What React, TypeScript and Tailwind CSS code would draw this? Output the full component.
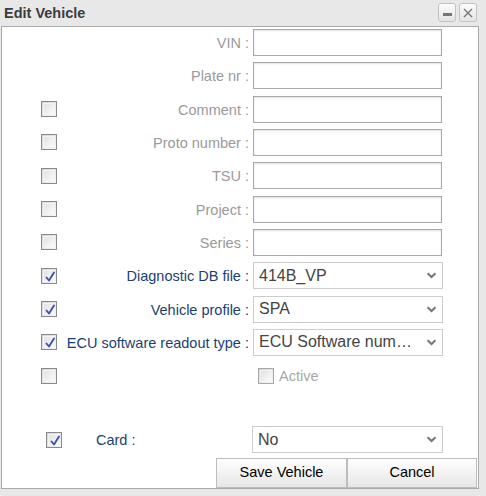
import React from "react";

const font = { fontFamily: '"Liberation Sans", Arial, sans-serif' };

function Check({ checked = false, disabled = false }: { checked?: boolean; disabled?: boolean }) {
  return (
    <div
      className={`w-[16px] h-[16px] border ${disabled ? "border-[#aaa]" : "border-[#8a8a8a]"} bg-gradient-to-br from-[#d4d4d4] to-[#f7f7f7] p-[1px] shrink-0`}
    >
      <div className="w-full h-full border border-[#f4f4f4] bg-gradient-to-br from-[#e2e2e2] to-[#fbfbfb] relative">
        {checked && (
          <svg viewBox="0 0 14 14" className="absolute left-[-1px] top-[-1px] w-[14px] h-[14px]">
            <path d="M3.5 7.5 L6 10.5 L11 2.5" stroke="#3d55a8" strokeWidth="1.9" fill="none" strokeLinecap="round" strokeLinejoin="round" />
          </svg>
        )}
      </div>
    </div>
  );
}

function Chevron() {
  return (
    <svg viewBox="0 0 12 8" className="w-[11px] h-[7px]">
      <path d="M1.5 1.5 L6 5.8 L10.5 1.5" stroke="#777" strokeWidth="2.4" fill="none" />
    </svg>
  );
}

function TextInput() {
  return <div className="w-[189px] h-[27px] border border-[#a9a9a9] bg-white shadow-[inset_0_1px_2px_rgba(0,0,0,0.12)]" />;
}

function Select({ value, w = "w-[190px]" }: { value: string; w?: string }) {
  return (
    <div className={`${w} h-[27px] border border-[#cdcdcd] bg-white flex items-center pl-[5px]`}>
      <span className="flex-1 min-w-0 text-[16px] text-[#444] whitespace-nowrap overflow-hidden text-ellipsis">{value}</span>
      <div className="w-[23px] shrink-0 flex items-center justify-center pl-[2px]">
        <Chevron />
      </div>
    </div>
  );
}

function Row({
  label,
  check,
  checked,
  enabled,
  children,
}: {
  label?: string;
  check?: boolean;
  checked?: boolean;
  enabled?: boolean;
  children: React.ReactNode;
}) {
  return (
    <div className="flex items-center h-[27px]">
      <div className="w-[251px] flex items-center">
        <div className="w-[55px] pl-[39px] flex items-center">{check && <Check checked={checked} />}</div>
        <div className={`flex-1 text-right pr-[4px] pt-[3px] text-[14.5px] whitespace-nowrap ${enabled ? "text-[#1b3f73]" : "text-[#9a9a9a]"}`}>
          {label}
        </div>
      </div>
      {children}
    </div>
  );
}

export default function App() {
  return (
    <div className="w-[486px] h-[496px] bg-[#e8e8e8] relative overflow-hidden" style={font}>
      <div className="h-[26px] flex items-start">
        <div className="pl-[4px] pt-[3px] text-[14.5px] font-bold text-[#3c3c3c] flex-1">Edit Vehicle</div>
        <div className="flex gap-[3px] pt-[3px] pr-[9px]">
          <div className="w-[18px] h-[19px] rounded-[3px] border border-[#c2c2c2] bg-gradient-to-b from-[#fdfdfd] to-[#e4e4e4] flex items-end justify-center pb-[5px]">
            <div className="w-[9px] h-[3px] bg-[#777]" />
          </div>
          <div className="w-[18px] h-[19px] rounded-[3px] border border-[#c2c2c2] bg-gradient-to-b from-[#fdfdfd] to-[#e4e4e4] flex items-center justify-center">
            <svg viewBox="0 0 10 10" className="w-[10px] h-[10px]">
              <path d="M1 1 L9 9 M9 1 L1 9" stroke="#777" strokeWidth="1.4" />
            </svg>
          </div>
        </div>
      </div>
      <div className="ml-[1px] w-[478px] h-[463px] border border-[#aaa] bg-white flex flex-col pt-[2px]">
        <div className="flex flex-col gap-[6.33px]">
          <Row label="VIN :">
            <TextInput />
          </Row>
          <Row label="Plate nr :">
            <TextInput />
          </Row>
          <Row label="Comment :" check>
            <TextInput />
          </Row>
          <Row label="Proto number :" check>
            <TextInput />
          </Row>
          <Row label="TSU :" check>
            <TextInput />
          </Row>
          <Row label="Project :" check>
            <TextInput />
          </Row>
          <Row label="Series :" check>
            <TextInput />
          </Row>
          <Row label="Diagnostic DB file :" check checked enabled>
            <Select value="414B_VP" />
          </Row>
          <Row label="Vehicle profile :" check checked enabled>
            <Select value="SPA" />
          </Row>
          <Row label="ECU software readout type :" check checked enabled>
            <Select value="ECU Software number" />
          </Row>
          <Row check>
            <div className="flex items-center pl-[5px] gap-[5px]">
              <Check disabled />
              <span className="text-[14.5px] pt-[2px] text-[#a8a8a8]">Active</span>
            </div>
          </Row>
        </div>
        <div className="flex items-center h-[27px] mt-[37px]">
          <div className="pl-[44px] w-[94px]">
            <Check checked />
          </div>
          <div className="w-[156px] text-[14.5px] pt-[2px] text-[#1b3f73]">Card :</div>
          <Select value="No" w="w-[191px]" />
        </div>
        <div className="flex justify-end mt-[5px] pr-[1px]">
          <button className="w-[131px] h-[30px] border border-[#bdbdbd] bg-gradient-to-b from-[#ffffff] to-[#e6e6e6] text-[14.5px] text-black">
            Save Vehicle
          </button>
          <button className="w-[130px] h-[30px] border border-[#bdbdbd] bg-gradient-to-b from-[#ffffff] to-[#e6e6e6] text-[14.5px] text-black">
            Cancel
          </button>
        </div>
      </div>
    </div>
  );
}
